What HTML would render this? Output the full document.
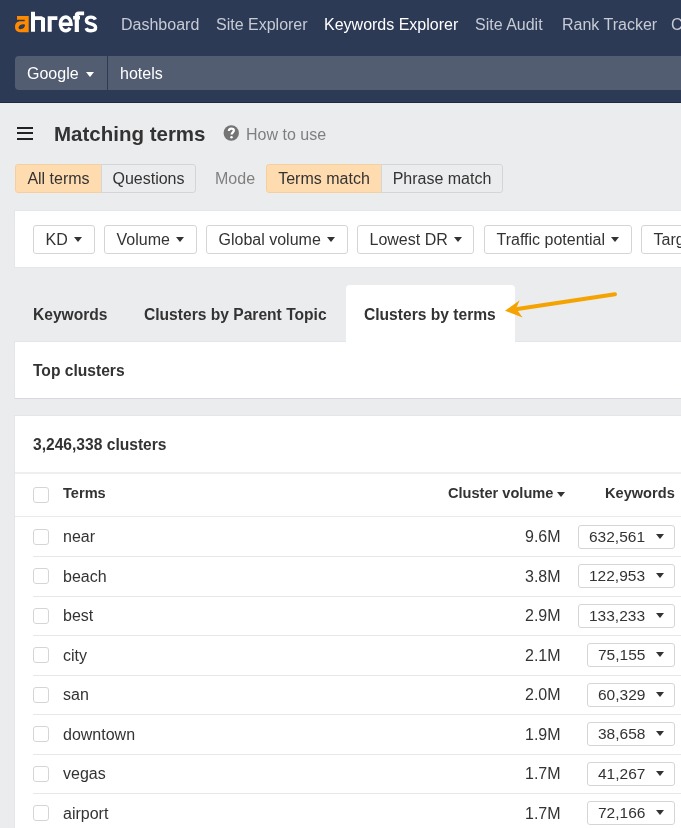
<!DOCTYPE html>
<html><head><meta charset="utf-8">
<style>
*{box-sizing:border-box;margin:0;padding:0}
html,body{width:681px;height:828px;overflow:hidden;background:#ebecee;font-family:"Liberation Sans",sans-serif;color:#333}
.abs{position:absolute;white-space:nowrap}
body>div,#hdr>div,#search>div{will-change:transform}
#hdr{position:absolute;left:0;top:0;width:681px;height:103px;background:#2d3a55;border-bottom:1px solid #1f2a42}
.nav{position:absolute;top:16px;font-size:16px;color:#c6cbd6;line-height:18px;white-space:nowrap}
#search{position:absolute;left:15px;top:55.5px;width:700px;height:33.5px;background:#535d71;border-radius:4px}
#gsep{position:absolute;left:92px;top:0;width:1px;height:34px;background:#2d3a55}
.tri{display:inline-block;width:0;height:0;border-left:4.5px solid transparent;border-right:4.5px solid transparent;border-top:5.5px solid #333}
.btn{position:absolute;height:29px;border:1px solid #d3d5d9;background:#ebecee;font-size:16px;line-height:28px;color:#333;text-align:center;white-space:nowrap}
.btn.on{background:#ffdcb0;border-color:#f4cf9f}
.panel{position:absolute;background:#fff}
.fbtn{position:absolute;top:225px;height:29px;border:1px solid #d5d5d5;border-radius:3px;background:#fff;font-size:16px;line-height:28px;color:#333;padding-left:11.5px;white-space:nowrap}
.fbtn .tri{position:relative;top:-3.5px;margin-left:1.5px}
.tab{position:absolute;top:304.5px;font-size:15.6px;font-weight:bold;color:#333;line-height:20px;white-space:nowrap}
.cb{position:absolute;left:33px;width:15.5px;height:15.5px;border:1px solid #d4d5d7;border-radius:3px;background:#fff}
.row{position:absolute;left:33px;width:660px;height:1px;background:#e6e7ea}
.term{position:absolute;left:62.5px;font-size:16px;color:#333;line-height:20px;white-space:nowrap}
.vol{position:absolute;right:120px;font-size:16px;color:#333;line-height:20px;text-align:right;white-space:nowrap}
.kw{position:absolute;right:6px;height:24px;border:1px solid #d5d5d5;border-radius:3px;font-size:15.5px;line-height:22px;color:#333;padding:0 10px 0 10px;white-space:nowrap}
.kw .tri{position:relative;top:-3px;margin-left:11px}
.th{position:absolute;top:483px;font-size:14.6px;font-weight:bold;line-height:20px;white-space:nowrap}
</style></head><body>
<div id="hdr">
<svg class="abs" style="left:0;top:0" width="100" height="40" viewBox="0 0 100 40">
  <path fill="#ff8a00" fill-rule="evenodd" d="M17,16 H28.7 V32.2 H20 C16.9,32.2 15,30.3 15,27 C15,23.4 17.2,21.3 20.6,21.3 H24.7 V19.8 H17 Z M24.7,24.6 C23.6,23.9 21.4,24.2 19.9,25.3 C18.5,26.4 18.1,28.2 19.2,28.9 C20.3,29.5 22.4,29.1 23.7,28 C24.8,27 25.4,25.2 24.7,24.6 Z"/>
  <path fill="#fff" d="M31,11.8 H35 V16.2 H41.6 L45,18.1 V31.7 H41 V20 H35 V31.7 H31 Z"/>
  <path fill="#fff" d="M47.7,16.2 H57.4 V20 H51.7 V31.7 H47.7 Z"/>
  <path fill="none" stroke="#fff" stroke-width="3.4" d="M60.3,24.2 H71.1 A5.4,6.85 0 1 0 70.1,27.9"/>
  <path fill="#fff" d="M74.7,32 V15.5 C74.7,12.8 76.3,11.6 79,11.6 H84.1 V15.2 H79.8 C79.1,15.2 78.9,15.5 78.9,16.2 V32 Z M73.1,16.1 H80 V19.4 H73.1 Z"/>
  <path fill="none" stroke="#fff" stroke-width="3.4" d="M95.3,19.6 C94.7,17.9 93,17.1 90.9,17.1 C88.3,17.1 86.4,18.4 86.4,20.4 C86.4,22.6 88.4,23.3 91,23.9 C93.7,24.5 95.6,25.3 95.6,27.6 C95.6,29.8 93.6,30.8 90.9,30.8 C88.5,30.8 86.8,29.9 86.2,28.1"/>
</svg>
  <div class="nav" style="left:121px">Dashboard</div>
  <div class="nav" style="left:216px">Site Explorer</div>
  <div class="nav" style="left:324px;color:#fff">Keywords Explorer</div>
  <div class="nav" style="left:475px">Site Audit</div>
  <div class="nav" style="left:562px">Rank Tracker</div>
  <div class="nav" style="left:671px">C</div>
  <div id="search">
    <div class="abs" style="left:12px;top:9px;font-size:16px;color:#fff;line-height:18px">Google</div>
    <span class="tri abs" style="left:71px;top:15.5px;border-top-color:#fff"></span>
    <div id="gsep"></div>
    <div class="abs" style="left:105px;top:9px;font-size:16px;color:#fff;line-height:18px">hotels</div>
  </div>
</div>

<div class="abs" style="left:17px;top:127px;width:16px;height:2px;background:#222"></div>
<div class="abs" style="left:17px;top:132px;width:16px;height:2px;background:#222"></div>
<div class="abs" style="left:17px;top:138px;width:16px;height:2px;background:#222"></div>
<div class="abs" style="left:54px;top:122px;font-size:20.5px;font-weight:bold;color:#333;line-height:24px">Matching terms</div>
<svg class="abs" style="left:221px;top:123px" width="22" height="22" viewBox="221 123 22 22"><circle cx="231.25" cy="133" r="7.7" fill="#747474"/><path d="M228.9,131 C228.9,129.3 230,128.6 231.4,128.6 C232.9,128.6 233.9,129.4 233.9,130.6 C233.9,132.2 231.6,132.5 231.6,134.5" fill="none" stroke="#fff" stroke-width="2.2"/><circle cx="231.5" cy="137.3" r="1.25" fill="#fff"/></svg>
<div class="abs" style="left:246px;top:124.5px;font-size:16px;color:#7f7f7f;line-height:20px">How to use</div>

<div class="btn on" style="left:15px;top:164px;width:87px;border-radius:3px 0 0 3px">All terms</div>
<div class="btn" style="left:101px;top:164px;width:95px;border-radius:0 3px 3px 0">Questions</div>
<div class="abs" style="left:215px;top:169px;font-size:16px;color:#808080;line-height:20px">Mode</div>
<div class="btn on" style="left:266px;top:164px;width:116px;border-radius:3px 0 0 3px">Terms match</div>
<div class="btn" style="left:381px;top:164px;width:122px;border-radius:0 3px 3px 0">Phrase match</div>

<div class="panel" style="left:15px;top:211px;width:700px;height:56px;box-shadow:0 0 0 1px #e5e6e9"></div>
<div class="fbtn" style="left:33px;width:62px">KD <span class="tri"></span></div>
<div class="fbtn" style="left:104px;width:93px">Volume <span class="tri"></span></div>
<div class="fbtn" style="left:206px;width:142px">Global volume <span class="tri"></span></div>
<div class="fbtn" style="left:357px;width:117px">Lowest DR <span class="tri"></span></div>
<div class="fbtn" style="left:484px;width:148px">Traffic potential <span class="tri"></span></div>
<div class="fbtn" style="left:641px;width:100px">Targ</div>

<div class="tab" style="left:33px">Keywords</div>
<div class="tab" style="left:144px">Clusters by Parent Topic</div>
<div class="panel" style="left:346px;top:285px;width:169px;height:58px;border-radius:4px 4px 0 0;z-index:1"></div>
<div class="tab" style="left:364px;z-index:2">Clusters by terms</div>
<svg class="abs" style="left:500px;top:285px;z-index:3" width="125" height="40" viewBox="0 0 125 40">
  <line x1="115" y1="9.3" x2="14" y2="24.5" stroke="#f5a300" stroke-width="4" stroke-linecap="round"/>
  <path d="M5,25.8 L19.7,15.3 L16,23.6 L22.6,32.4 Z" fill="#f5a300"/>
</svg>

<div class="panel" style="left:15px;top:341px;width:700px;height:58px;border-bottom:1px solid #d8d9dc;border-top:1px solid #e4e5e8;box-shadow:-1px 0 0 0 #e5e6e9"></div>
<div class="abs" style="left:33px;top:360.5px;font-size:15.6px;font-weight:bold;line-height:20px">Top clusters</div>

<div class="panel" style="left:15px;top:416px;width:700px;height:420px;box-shadow:0 0 0 1px #e5e6e9"></div>
<div class="abs" style="left:33px;top:434.5px;font-size:15.6px;font-weight:bold;line-height:20px">3,246,338 clusters</div>
<div class="abs" style="left:15px;top:472px;width:700px;height:2px;background:#eeeff1"></div>
<div class="cb" style="top:487px"></div>
<div class="th" style="left:63px">Terms</div>
<div class="th" style="left:447.5px">Cluster volume <span class="tri" style="position:relative;top:-1px;border-left-width:4px;border-right-width:4px;border-top-width:5px"></span></div>
<div class="th" style="left:604.5px">Keywords</div>
<div class="abs" style="left:15px;top:516px;width:700px;height:1px;background:#e9e9eb"></div>
<div class="cb" style="top:528.80px"></div>
<div class="term" style="top:527.00px">near</div>
<div class="vol" style="top:527.00px">9.6M</div>
<div class="kw" style="top:524.50px">632,561<span class="tri"></span></div>
<div class="row" style="top:556.00px"></div>
<div class="cb" style="top:568.30px"></div>
<div class="term" style="top:566.50px">beach</div>
<div class="vol" style="top:566.50px">3.8M</div>
<div class="kw" style="top:564.00px">122,953<span class="tri"></span></div>
<div class="row" style="top:595.50px"></div>
<div class="cb" style="top:607.80px"></div>
<div class="term" style="top:606.00px">best</div>
<div class="vol" style="top:606.00px">2.9M</div>
<div class="kw" style="top:603.50px">133,233<span class="tri"></span></div>
<div class="row" style="top:635.00px"></div>
<div class="cb" style="top:647.30px"></div>
<div class="term" style="top:645.50px">city</div>
<div class="vol" style="top:645.50px">2.1M</div>
<div class="kw" style="top:643.00px">75,155<span class="tri"></span></div>
<div class="row" style="top:674.50px"></div>
<div class="cb" style="top:686.80px"></div>
<div class="term" style="top:685.00px">san</div>
<div class="vol" style="top:685.00px">2.0M</div>
<div class="kw" style="top:682.50px">60,329<span class="tri"></span></div>
<div class="row" style="top:714.00px"></div>
<div class="cb" style="top:726.30px"></div>
<div class="term" style="top:724.50px">downtown</div>
<div class="vol" style="top:724.50px">1.9M</div>
<div class="kw" style="top:722.00px">38,658<span class="tri"></span></div>
<div class="row" style="top:753.50px"></div>
<div class="cb" style="top:765.80px"></div>
<div class="term" style="top:764.00px">vegas</div>
<div class="vol" style="top:764.00px">1.7M</div>
<div class="kw" style="top:761.50px">41,267<span class="tri"></span></div>
<div class="row" style="top:793.00px"></div>
<div class="cb" style="top:805.30px"></div>
<div class="term" style="top:803.50px">airport</div>
<div class="vol" style="top:803.50px">1.7M</div>
<div class="kw" style="top:801.00px">72,166<span class="tri"></span></div>
</body></html>
